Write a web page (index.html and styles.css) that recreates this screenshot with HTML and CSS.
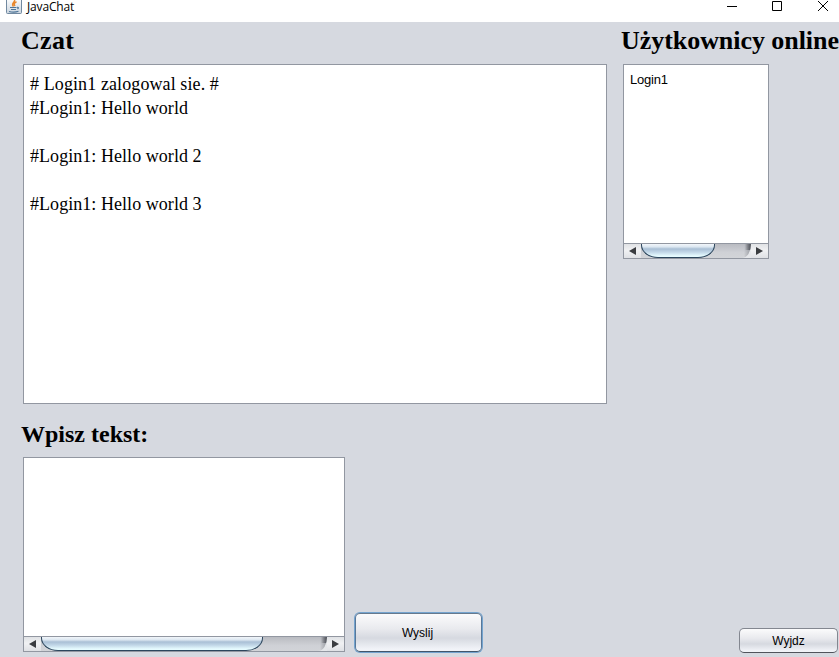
FILE: index.html
```html
<!DOCTYPE html>
<html lang="pl">
<head>
<meta charset="utf-8">
<title>JavaChat</title>
<link rel="stylesheet" href="styles.css">
</head>
<body>
<header class="titlebar">
  <svg class="app-icon" width="16" height="14" viewBox="0 0 16 14">
    <defs><linearGradient id="ig" x1="0" y1="0" x2="0" y2="1"><stop offset="0" stop-color="#fff"/><stop offset="1" stop-color="#cbd5df"/></linearGradient></defs>
    <path d="M.5-2V12.500Q.5 13.500 1.500 13.500H14.500Q15.500 13.500 15.500 12.500V-2" fill="url(#ig)" stroke="#7189a0"/>
    <path d="M8.500 0C9.500 2 4.500 3 7.500 6.500M10.500 1.800C7.500 3 8 4.500 9 6" fill="none" stroke="#e8872c" stroke-width="1.500"/>
    <path d="M4 7.500H10.500M5 9.500H10M3 11.500Q8 12.800 12.500 11.300M11 7.300Q13.500 7 11.500 9" fill="none" stroke="#4f7699" stroke-width="1.200"/>
  </svg>
  <span class="app-name">JavaChat</span>
  <svg class="controls" width="104" height="12" viewBox="0 0 104 12" fill="none" stroke="#000">
    <path d="M0 6.500H10M45.500 1.500H54.500V10.500H45.500ZM91 1L101 11M101 1L91 11"/>
  </svg>
</header>
<main class="window">
  <section class="left">
    <h1 class="heading chat-title">Czat</h1>
    <div class="panel log"><p class="join"># Login1 zalogowal sie. #</p><p>#Login1: Hello world</p><p></p><p>#Login1: Hello world 2</p><p></p><p>#Login1: Hello world 3</p></div>
    <h2 class="heading compose-title">Wpisz tekst:</h2>
    <div class="compose">
      <div class="panel input">
        <div class="view"></div>
        <div class="scrollbar"><span class="arrow"><i class="tri prev"></i></span><div class="track"><div class="thumb thumb-wide"></div><div class="rest"></div></div><span class="arrow"><i class="tri next"></i></span></div>
      </div>
      <button class="btn send">Wyslij</button>
    </div>
  </section>
  <aside class="right">
    <h2 class="heading users-title">Użytkownicy online</h2>
    <div class="panel users">
      <div class="view user">Login1</div>
      <div class="scrollbar"><span class="arrow"><i class="tri prev"></i></span><div class="track"><div class="thumb thumb-small"></div><div class="rest"></div></div><span class="arrow"><i class="tri next"></i></span></div>
    </div>
    <button class="btn exit">Wyjdz</button>
  </aside>
</main>
</body>
</html>
```
FILE: styles.css
```css
* { box-sizing: border-box; }
body { margin: 0; width: 839px; height: 657px; overflow: hidden; background: #d6d9e0; color: #000; display: flex; flex-direction: column; }
p, h1, h2 { margin: 0; }
.titlebar { height: 22px; flex: none; background: #fff; display: flex; align-items: flex-start; padding-left: 6px; }
.app-icon { flex: none; }
.app-name { font: 12px/14px "Open Sans", sans-serif; letter-spacing: -0.15px; margin-left: 5px; }
.controls { margin-left: auto; margin-right: 8px; }
.window { flex: 1; display: flex; gap: 16px; padding-left: 23px; min-height: 0; }
.left { width: 584px; flex: none; }
.right { width: 216px; flex: none; display: flex; flex-direction: column; }
.heading { font: bold 26px/38px "Liberation Serif", serif; white-space: nowrap; height: 42px; margin-left: -2px; }
.chat-title { letter-spacing: 0.3px; }
.users-title { letter-spacing: -0.05px; }
.compose-title { font-size: 24px; line-height: 60px; height: 53px; }
.panel { background: #fff; border: 1px solid #9297a1; }
.log { height: 340px; padding: 7px 6px; font: 18px/24px "Liberation Serif", serif; letter-spacing: 0.05px; }
.log p { height: 24px; }
.log .join { letter-spacing: 0.1px; }
.compose { display: flex; gap: 9px; align-items: flex-end; }
.input { width: 322px; height: 195px; display: flex; flex-direction: column; }
.users { width: 146px; height: 195px; flex: none; display: flex; flex-direction: column; }
.view { flex: 1; }
.user { font: 13px/16px "Liberation Sans", sans-serif; letter-spacing: -0.2px; padding: 7px 6px; }
.scrollbar { height: 15px; flex: none; display: flex; border-top: 1px solid #9297a1; background: #e5e7ea; }
.arrow { width: 17px; flex: none; display: flex; align-items: center; justify-content: center; background: linear-gradient(#e0e2e5, #f0f1f3 45%, #dfe1e5); }
.tri { border: 4px solid transparent; }
.prev { border-left: 0; border-right: 7px solid #3a3c40; }
.next { border-right: 0; border-left: 7px solid #3a3c40; }
.track { flex: 1; display: flex; background: linear-gradient(#b9bbc1, #cfd1d6 60%, #d2d4d8); border-bottom-right-radius: 9px 14px; }
.rest { flex: 1; border-bottom-right-radius: 9px 14px; background: linear-gradient(90deg, transparent calc(100% - 6px), #4d5057) top / 100% 6px no-repeat, linear-gradient(90deg, transparent calc(100% - 7px), #96999f); }
.thumb { border: 1px solid #2c465d; border-top: 0; border-radius: 0 0 17px 17px / 0 0 13px 13px; background: linear-gradient(#f2f6fa, #dce7f1 22%, #a9bfd5 38%, #c1d6e7 62%, #e6fbff 92%); }
.thumb-wide { width: 222px; }
.thumb-small { width: 74px; }
.btn { font: 12px "Liberation Sans", sans-serif; padding: 0; color: #000; background: linear-gradient(#fbfbfc, #e9eaee 40%, #d6d9e0 65%, #f1f3f8 95%); border: 1px solid #838790; border-bottom-color: #50545c; border-radius: 5px; }
.send { width: 127px; height: 39px; margin: 0 0 0 1px; padding-right: 2px; border-color: #66798d #58789a #41566b; box-shadow: 0 0 0 1px #74a4cf; }
.exit { width: 99px; height: 25px; margin: auto 0 4px 116px; }
```
